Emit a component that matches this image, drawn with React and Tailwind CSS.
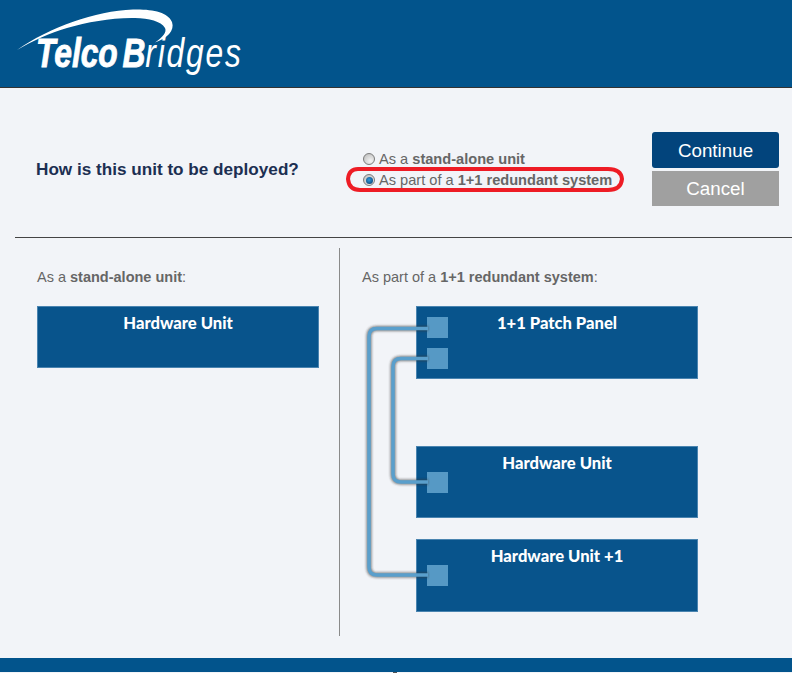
import React from "react";

const Logo = () => (
  <svg width="260" height="87" viewBox="0 0 260 87" className="block" aria-label="TelcoBridges logo">
    <path d="M17 50 C50 27 95 11 133 9.500 C152 9 168 12 172 22 C175 31 167 38 155 42.500 C163 37 167 32 165 28 C161 21 149 18.500 135 18 C112 17.500 88 22 67 28 C50 33 32 41 17 50 Z" fill="#fff" />
    <text transform="translate(36 67) scale(0.775 1)" fontFamily="'Liberation Sans', Arial, sans-serif" fontStyle="italic" fontSize="41" fill="#fff">
      <tspan fontWeight="700" stroke="#fff" strokeWidth="0.900">Telco</tspan>
      <tspan dx="6" fontWeight="700" stroke="#fff" strokeWidth="0.900">B</tspan>
      <tspan fontWeight="400" letterSpacing="2.300">ridges</tspan>
    </text>
  </svg>
);

const Radio = ({ checked }) => (
  <span className="relative inline-block w-[12px] h-[12px] rounded-full border border-[#7c7c7c] bg-[radial-gradient(circle_at_65%_70%,#f4f4f4,#b8b8b8)] shrink-0">
    {checked && (
      <span className="absolute left-[1.500px] top-[1.500px] w-[7px] h-[7px] rounded-full bg-[radial-gradient(circle_at_45%_40%,#2f9ae0,#06355f)]" />
    )}
  </span>
);

const Option = ({ checked, children, className = "" }) => (
  <div className={`flex items-center gap-[4px] h-[20px] text-[14.600px] text-[#666666] ${className}`}>
    <Radio checked={checked} />
    <span className="relative top-[1px]">{children}</span>
  </div>
);

const Block = ({ title, className, ports = [] }) => (
  <div className={`relative w-[282px] bg-[#08548c] border border-[#4a84b0] ${className}`}>
    <p className="text-center text-white font-black text-[16.600px] leading-[20px] pt-[5.500px] font-['Lato',sans-serif]">{title}</p>
    {ports.map((top) => (
      <span key={top} style={{ top }} className="absolute left-[10px] w-[21px] h-[21px] bg-[#5699c5]" />
    ))}
  </div>
);

const Connectors = () => (
  <svg width="80" height="280" viewBox="0 0 80 280" className="absolute left-[360px] top-[310px]" aria-hidden="true">
    <defs>
      <filter id="soft" x="-20%" y="-20%" width="140%" height="140%">
        <feGaussianBlur stdDeviation="1" />
      </filter>
    </defs>
    <g fill="none">
      <g stroke="#3a3a3a" strokeOpacity="0.55" strokeWidth="5.500" filter="url(#soft)">
        <path d="M68 18.500 H17 Q9 18.500 9 26.500 V257 Q9 265 17 265 H68" />
        <path d="M68 48.500 H41 Q33 48.500 33 56.500 V164 Q33 172 41 172 H68" />
      </g>
      <g stroke="#5a9fcc" strokeWidth="3.500">
        <path d="M68 18.500 H17 Q9 18.500 9 26.500 V257 Q9 265 17 265 H68" />
        <path d="M68 48.500 H41 Q33 48.500 33 56.500 V164 Q33 172 41 172 H68" />
      </g>
    </g>
  </svg>
);

export default function App() {
  return (
    <div className="relative w-[792px] h-[673px] overflow-hidden flex flex-col bg-[#f2f4f8] font-['Liberation_Sans',Arial,sans-serif]">
      <header className="h-[88px] shrink-0 bg-[#02548c] border-b border-[#333333]">
        <Logo />
      </header>

      <main className="flex-1 min-h-0 flex flex-col">
        <section className="h-[150px] shrink-0 ml-[15px] border-b border-[#444444] flex items-start">
          <h1 className="ml-[21px] mt-[70px] w-[327px] text-[17.150px] leading-[22px] font-bold text-[#1c2f52]">
            How is this unit to be deployed?
          </h1>
          <div className="relative w-[289px] mt-[61px]">
            <Option>As a <b>stand-alone unit</b></Option>
            <Option checked className="mt-[1px]">As part of a <b>1+1 redundant system</b></Option>
            <svg width="280" height="28" viewBox="0 0 280 28" className="absolute left-[-17px] top-[17px]" aria-hidden="true">
              <path d="M12 3 H262 Q275 3 276 13 Q275 24 262 24 H14 Q3 24 2 13 Q3 3 12 3 Z" fill="none" stroke="#ee1c25" strokeWidth="4" />
            </svg>
          </div>
          <div className="w-[127px] mt-[44px] flex flex-col gap-[3px] text-white text-[18.800px]">
            <button className="h-[36px] pt-[2px] rounded-[3px] bg-[#02447c]">Continue</button>
            <button className="h-[35px] pt-[2px] bg-[#a0a0a0]">Cancel</button>
          </div>
        </section>

        <section className="flex mt-[10px] h-[388px]">
          <div className="w-[340px] border-r border-[#8a8a8a] pl-[37px] pt-[20px]">
            <p className="text-[14.500px] leading-[18px] text-[#666666]">As a <b>stand-alone unit</b>:</p>
            <Block title="Hardware Unit" className="h-[62px] mt-[20px]" />
          </div>
          <div className="pl-[22px] pt-[20px]">
            <p className="text-[14.500px] leading-[18px] text-[#666666]">As part of a <b>1+1 redundant system</b>:</p>
            <div className="ml-[54px] mt-[20px] flex flex-col">
              <Block title="1+1 Patch Panel" className="h-[73px]" ports={[10, 41]} />
              <Block title="Hardware Unit" className="h-[72px] mt-[67px]" ports={[25]} />
              <Block title="Hardware Unit +1" className="h-[73px] mt-[21px]" ports={[25]} />
            </div>
          </div>
        </section>
        <Connectors />
      </main>

      <footer className="h-[14px] shrink-0 mb-[1px] bg-[#02548c]" />
      <span className="absolute bottom-0 left-[393px] w-[4px] h-[1px] bg-[#555555]" />
    </div>
  );
}
